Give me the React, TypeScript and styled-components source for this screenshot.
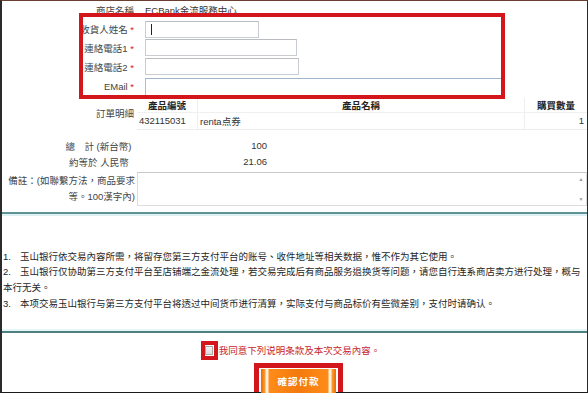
import React from "react";
import styled, { createGlobalStyle } from "styled-components";

const GlobalStyle = createGlobalStyle`
  html, body {
    margin: 0;
    padding: 0;
    background: #ffffff;
  }
  body {
    font-family: "Liberation Sans", "Noto Sans CJK TC", sans-serif;
    font-size: 9.5px;
    color: #333333;
  }
`;

function App() {
  return (
    <>
      <GlobalStyle />
      <Frame>
        <Row height={19}>
          <Label>商店名稱</Label>
          <Value>ECBank金流服務中心</Value>
        </Row>
        <Row height={19}>
          <Label>
            收貨人姓名 <Star>*</Star>
          </Label>
          <Value>
            <Input width={114} caret />
          </Value>
        </Row>
        <Row height={19}>
          <Label>
            連絡電話1 <Star>*</Star>
          </Label>
          <Value>
            <Input width={152} />
          </Value>
        </Row>
        <Row height={19}>
          <Label>
            連絡電話2 <Star>*</Star>
          </Label>
          <Value>
            <Input width={154} />
          </Value>
        </Row>
        <Row height={21}>
          <Label>
            EMail <Star>*</Star>
          </Label>
          <Value>
            <Input width={357} height={18} blue />
          </Value>
        </Row>

        <Row height={33}>
          <Label>訂單明細</Label>
          <Table>
            <thead>
              <tr>
                <HeadCell width={60}>產品編號</HeadCell>
                <HeadCell width={326}>產品名稱</HeadCell>
                <HeadCell>購買數量</HeadCell>
              </tr>
            </thead>
            <tbody>
              <tr>
                <Cell>432115031</Cell>
                <Cell>renta点券</Cell>
                <Cell align="right">1</Cell>
              </tr>
            </tbody>
          </Table>
        </Row>

        <Totals>
          <Row height={16}>
            <Label>總　計 (新台幣)&nbsp;</Label>
            <Amount>100</Amount>
          </Row>
          <Row height={16}>
            <Label>約等於 人民幣&nbsp;&nbsp;</Label>
            <Amount>21.06</Amount>
          </Row>
        </Totals>

        <Row height={34} top={2}>
          <RemarkLabel>
            備註：(如聯繫方法，商品要求
            <br />
            等。100漢字內)
          </RemarkLabel>
          <RemarkBox>
            <RemarkInput />
            <ScrollTrack>
              <Arrow>▲</Arrow>
              <Arrow>▼</Arrow>
            </ScrollTrack>
          </RemarkBox>
        </Row>

        <Terms>
          <p>
            <Num>1.</Num>玉山银行依交易內容所需，将留存您第三方支付平台的账号、收件地址等相关数据，惟不作为其它使用。
          </p>
          <p>
            <Num>2.</Num>玉山银行仅协助第三方支付平台至店铺端之金流处理，若交易完成后有商品服务退换货等问题，请您自行连系商店卖方进行处理，概与
            <br />
            本行无关。
          </p>
          <p>
            <Num>3.</Num>本项交易玉山银行与第三方支付平台将透过中间货币进行清算，实际支付与商品标价有些微差别，支付时请确认。
          </p>
        </Terms>

        <AgreeRow>
          <Mark>
            <Check />
          </Mark>
          <AgreeText>我同意下列说明条款及本次交易內容。</AgreeText>
        </AgreeRow>

        <ButtonRow>
          <ButtonMark>
            <PayButton>確認付款</PayButton>
          </ButtonMark>
        </ButtonRow>

        <Highlight />
      </Frame>
    </>
  );
}

const Frame = styled.div`
  position: relative;
  box-sizing: border-box;
  width: 588px;
  height: 393px;
  border-top: 1px solid #6b3f30;
  border-left: 2px solid #2b2b2b;
  border-right: 1px solid #2b2b2b;
  border-bottom: 1px solid #1a1a1a;
  display: flex;
  flex-direction: column;
`;

const Highlight = styled.div`
  position: absolute;
  left: 77px;
  top: 12px;
  width: 426px;
  height: 86px;
  box-sizing: border-box;
  border: 4px solid #d2161b;
  pointer-events: none;
`;

const Row = styled.div<{ height: number; top?: number }>`
  display: grid;
  grid-template-columns: 135px 1fr;
  align-items: center;
  height: ${({ height }) => height}px;
  margin-top: ${({ top }) => top || 0}px;
`;

const Label = styled.div`
  text-align: right;
  padding-right: 3px;
  color: #444444;
  white-space: nowrap;
`;

const Star = styled.span`
  color: #d42020;
`;

const Value = styled.div`
  padding-left: 8px;
  display: flex;
  align-items: center;
  white-space: nowrap;
`;

const Input = styled.div<{ width: number; height?: number; blue?: boolean; caret?: boolean }>`
  box-sizing: border-box;
  width: ${({ width }) => width}px;
  height: ${({ height }) => height || 17}px;
  background-color: #ffffff;
  border: 1px solid ${({ blue }) => (blue ? "#a9bfd3" : "#c9cdd1")};
  border-top-color: ${({ blue }) => (blue ? "#9fb6cc" : "#b9bdc2")};
  background-image: ${({ caret }) =>
    caret ? "linear-gradient(#222, #222)" : "none"};
  background-repeat: no-repeat;
  background-size: 1px 11px;
  background-position: 5px center;
`;

const Table = styled.table`
  border-collapse: collapse;
  width: 450px;
  align-self: start;
  margin-top: 1px;
`;

const HeadCell = styled.th<{ width?: number }>`
  width: ${({ width }) => (width ? `${width}px` : "auto")};
  height: 14px;
  padding: 0;
  font-weight: bold;
  color: #222222;
  text-align: center;
  border-right: 1px solid #eeeeee;
  border-bottom: 1px solid #f0f0f0;

  &:last-child {
    border-right: none;
  }
`;

const Cell = styled.td<{ align?: string }>`
  height: 16px;
  padding: 0 3px 0 2px;
  text-align: ${({ align }) => align || "left"};
  border-right: 1px solid #eeeeee;
  border-bottom: 1px solid #ececec;
  white-space: nowrap;

  &:last-child {
    border-right: none;
  }
`;

const Totals = styled.div`
  margin-top: 8px;
  display: flex;
  flex-direction: column;
`;

const Amount = styled.div`
  width: 130px;
  text-align: right;
`;

const RemarkLabel = styled.div`
  text-align: right;
  padding-right: 2px;
  line-height: 16px;
  color: #444444;
  white-space: nowrap;
`;

const RemarkBox = styled.div`
  display: flex;
  height: 34px;
  box-sizing: border-box;
  border: 1px solid #dddddd;
  border-top-color: #c8c8c8;
`;

const RemarkInput = styled.div`
  flex: 1;
`;

const ScrollTrack = styled.div`
  width: 10px;
  display: flex;
  flex-direction: column;
  justify-content: space-between;
  align-items: center;
  padding: 3px 0;
`;

const Arrow = styled.span`
  font-size: 5px;
  line-height: 6px;
  color: #9a9a9a;
`;

const Terms = styled.div`
  margin-top: 6px;
  height: 122px;
  box-sizing: border-box;
  border-top: 2px solid #5f9396;
  border-bottom: 2px solid #4f7f80;
  box-shadow: inset 0 2px 0 #dff2f3, inset 0 -2px 0 #e4f6f6;
  padding: 35px 0 0 1px;
  line-height: 15.6px;
  color: #262626;
  white-space: nowrap;

  p {
    margin: 0;
  }
`;

const Num = styled.span`
  display: inline-block;
  width: 17px;
`;

const AgreeRow = styled.div`
  margin-top: 8px;
  display: flex;
  align-items: center;
  justify-content: center;
  padding-right: 8px;
`;

const Mark = styled.div`
  box-sizing: border-box;
  width: 17px;
  height: 19px;
  border: 4px solid #d2161b;
  display: flex;
  align-items: center;
  justify-content: center;
`;

const Check = styled.div`
  width: 8px;
  height: 9px;
  box-sizing: border-box;
  border: 1px solid #a8a8a8;
  background: linear-gradient(#f4f4f4, #dcdcdc);
`;

const AgreeText = styled.span`
  margin-left: 1px;
  color: #c8262b;
`;

const ButtonRow = styled.div`
  position: relative;
  z-index: 1;
  margin-top: 3px;
  display: flex;
  justify-content: center;
  padding-left: 8px;
`;

const ButtonMark = styled.div`
  border: 5px solid #d2161b;
  border-bottom: none;
  padding: 1px 2px 0;
  height: 29px;
  box-sizing: border-box;
  background: #ffffff;
`;

const PayButton = styled.div`
  width: 75px;
  height: 24px;
  display: flex;
  align-items: center;
  justify-content: center;
  color: #ffffff;
  font-weight: bold;
  font-size: 9.5px;
  letter-spacing: 1px;
  background: linear-gradient(
    to right,
    #e86a00 0,
    #ff9b33 4px,
    #fff2d8 5px,
    #fff2d8 7px,
    #ff8c1a 8px,
    #f47a0c 50%,
    #ff8c1a calc(100% - 8px),
    #fff2d8 calc(100% - 7px),
    #fff2d8 calc(100% - 5px),
    #ff9b33 calc(100% - 4px),
    #e86a00 100%
  );
`;

export default App;
